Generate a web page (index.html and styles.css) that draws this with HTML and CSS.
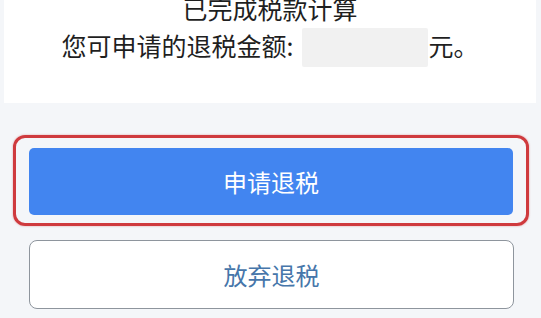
FILE: index.html
```html
<!DOCTYPE html>
<html>
<head>
    <meta charset="utf-8">
    <title>退税</title>
    <link rel="stylesheet" href="styles.css">
</head>
<body>

    <!-- Resultado del cálculo -->
    <div class="card">
        <div class="title">已完成税款计算</div>
        <div class="amount">
            <span class="label">您可申请的退税金额:</span>
            <span class="hidden_value"></span>
            <span class="unit">元。</span>
        </div>
    </div>

    <!-- Botones -->
    <div class="highlight">
        <button type="button" class="btn btn_apply">申请退税</button>
    </div>
    <button type="button" class="btn btn_giveup">放弃退税</button>

</body>
</html>
```

FILE: styles.css
```css
body {
    margin: 0;
    background-color: #f4f6f9;
    font-family: "Noto Sans CJK SC", "Noto Sans", sans-serif;
    color: #1f1f1f;
    overflow: hidden;
}

/* Tarjeta con el resultado */
.card {
    background-color: #fff;
    margin: -10px 5px 0 4px;
    height: 113px;
}

.title {
    font-size: 25px;
    line-height: 37px;
    text-align: center;
}

.amount {
    display: flex;
    justify-content: center;
    align-items: flex-start;
    margin-top: 1px;
    font-size: 25px;
    line-height: 34px;
}

.hidden_value {
    width: 126px;
    height: 39px;
    margin-left: 9px;
    background-color: #f1f1f1;
    border-radius: 2px;
}

/* Botones */
.highlight {
    margin: 32px 12px 0 13px;
    padding: 10px 13px 8px;
    border: 3px solid #cf3a3e;
    border-radius: 12px;
    box-shadow: 0 0 2px rgba(207, 58, 62, 0.5);
}

.btn {
    display: block;
    width: 485px;
    height: 67px;
    font-family: "Noto Sans CJK SC", "Noto Sans", sans-serif;
    font-size: 24px;
    cursor: pointer;
}

.btn_apply {
    width: 100%;
    background-color: #4285f0;
    color: #fff;
    border: none;
    border-radius: 5px;
}

.btn_giveup {
    margin: 14px 0 0 29px;
    height: 69px;
    background-color: #fff;
    color: #4676aa;
    border: 1px solid #8e959d;
    border-radius: 8px;
}
```
